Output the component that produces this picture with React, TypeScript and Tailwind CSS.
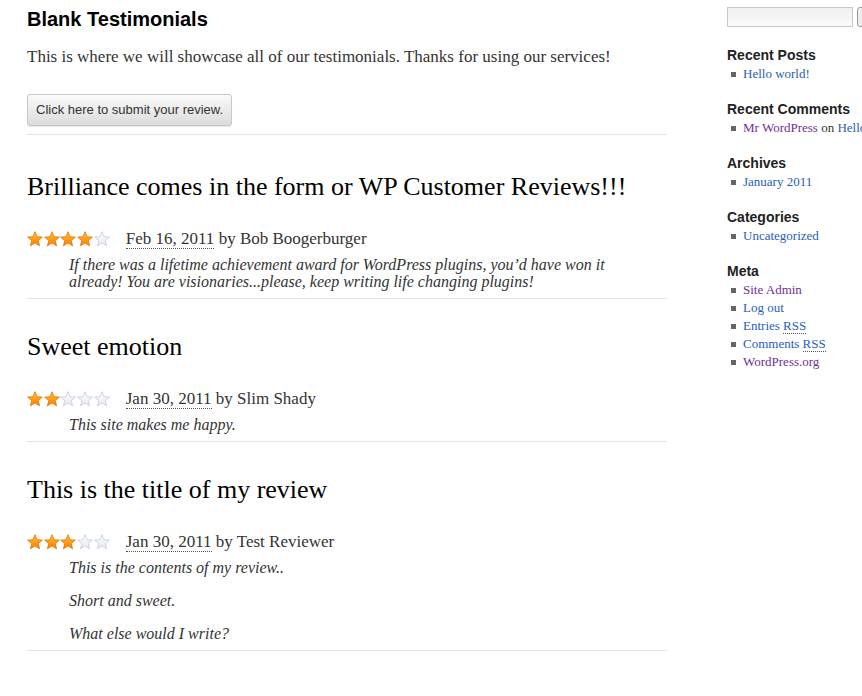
import React from "react";

interface Review {
  title: string;
  rating: number;
  date: string;
  author: string;
  body: string[];
}

const reviews: Review[] = [
  {
    title: "Brilliance comes in the form or WP Customer Reviews!!!",
    rating: 4,
    date: "Feb 16, 2011",
    author: "Bob Boogerburger",
    body: [
      "If there was a lifetime achievement award for WordPress plugins, you\u2019d have won it already! You are visionaries...please, keep writing life changing plugins!",
    ],
  },
  {
    title: "Sweet emotion",
    rating: 2,
    date: "Jan 30, 2011",
    author: "Slim Shady",
    body: ["This site makes me happy."],
  },
  {
    title: "This is the title of my review",
    rating: 3,
    date: "Jan 30, 2011",
    author: "Test Reviewer",
    body: ["This is the contents of my review..", "Short and sweet.", "What else would I write?"],
  },
];

const serif = "font-['Liberation_Serif',Georgia,serif]";
const sans = "font-['Liberation_Sans',Arial,sans-serif]";

function Star({ filled }: { filled: boolean }) {
  return (
    <svg width="16" height="16" viewBox="0 0 16 16" className="block">
      <polygon
        points="8,0.7 10,5.75 15.42,6.09 11.23,9.55 12.58,14.81 8,11.9 3.42,14.81 4.77,9.55 0.58,6.09 6,5.75"
        fill={filled ? "url(#starFill)" : "url(#starEmpty)"}
        stroke={filled ? "#e87400" : "#c3ccd8"}
        strokeWidth="0.8"
        strokeLinejoin="round"
      />
    </svg>
  );
}

function Stars({ rating }: { rating: number }) {
  return (
    <div className="flex gap-[0.7px]">
      {[1, 2, 3, 4, 5].map((i) => (
        <Star key={i} filled={i <= rating} />
      ))}
    </div>
  );
}

function ReviewItem({ review, first }: { review: Review; first: boolean }) {
  return (
    <div className="border-b border-[#e4e4e4]">
      <h2
        className={`${serif} text-[26px] leading-[30px] text-black ${first ? "mt-[37px]" : "mt-[33px]"}`}
      >
        {review.title}
      </h2>
      <div className="flex items-center mt-[27px] h-[20px]">
        <Stars rating={review.rating} />
        <span className={`${serif} text-[17px] text-[#333] ml-[16px]`}>
          <span className="border-b border-dotted border-[#555]">{review.date}</span> by {review.author}
        </span>
      </div>
      <div
        className={`${serif} italic text-[16px] leading-[17px] text-[#333] pl-[42px] pr-[60px] mt-[7px] mb-[8px]`}
      >
        {review.body.map((p, i) => (
          <p key={i} className={i < review.body.length - 1 ? "mb-[16px]" : ""}>
            {p}
          </p>
        ))}
      </div>
    </div>
  );
}

function Bullet() {
  return <span className="inline-block w-[5px] h-[5px] bg-[#666] mr-[7px] ml-[4px] align-middle mb-[2px]" />;
}

function SideSection({ title, children }: { title: string; children: React.ReactNode }) {
  return (
    <div className="mb-[17px]">
      <h3 className={`${sans} font-bold text-[14px] leading-[18px] text-[#222]`}>{title}</h3>
      <ul className={`${serif} text-[13px] leading-[18px] mt-[1px]`}>{children}</ul>
    </div>
  );
}

const blue = "text-[#2760b9]";
const purple = "text-[#70309a]";

export default function App() {
  return (
    <div className="w-[862px] h-[696px] overflow-hidden bg-white">
      <svg width="0" height="0" className="absolute">
        <defs>
          <linearGradient id="starFill" x1="0" y1="0" x2="0" y2="1">
            <stop offset="0" stopColor="#ffc233" />
            <stop offset="1" stopColor="#ff7b00" />
          </linearGradient>
          <linearGradient id="starEmpty" x1="0" y1="0" x2="0" y2="1">
            <stop offset="0" stopColor="#ffffff" />
            <stop offset="1" stopColor="#e3e9f0" />
          </linearGradient>
        </defs>
      </svg>
      <div className="flex">
        <main className="w-[640px] ml-[27px] shrink-0">
          <h1 className={`${sans} font-bold text-[20px] leading-[24px] text-black mt-[7px]`}>Blank Testimonials</h1>
          <p className={`${serif} text-[17px] leading-[24px] text-[#333] mt-[14px]`}>
            This is where we will showcase all of our testimonials. Thanks for using our services!
          </p>
          <div className="border-b border-[#e4e4e4] pt-[25px] pb-[8px]">
            <button
              className={`${sans} text-[13px] text-[#333] h-[32px] px-[8px] rounded-[3px] border border-[#c8c8c8] bg-gradient-to-b from-[#fafafa] to-[#dcdcdc] shadow-[0_1px_1px_rgba(0,0,0,0.1)]`}
            >
              Click here to submit your review.
            </button>
          </div>
          {reviews.map((r, i) => (
            <ReviewItem key={i} review={r} first={i === 0} />
          ))}
        </main>
        <aside className="ml-[60px] shrink-0 whitespace-nowrap">
          <div className="flex mt-[7px] gap-[4px]">
            <div className="w-[126px] h-[20px] border border-[#c8c8c8] bg-gradient-to-b from-[#f0f0f0] to-[#fafafa]" />
            <div className="w-[20px] h-[20px] border border-[#999] rounded-[3px] bg-[#eee]" />
          </div>
          <div className="mt-[19px]">
            <SideSection title="Recent Posts">
              <li><Bullet /><span className={blue}>Hello world!</span></li>
            </SideSection>
            <SideSection title="Recent Comments">
              <li>
                <Bullet />
                <span className={purple}>Mr WordPress</span>
                <span className="text-[#333]"> on </span>
                <span className={blue}>Hello world!</span>
              </li>
            </SideSection>
            <SideSection title="Archives">
              <li><Bullet /><span className={blue}>January 2011</span></li>
            </SideSection>
            <SideSection title="Categories">
              <li><Bullet /><span className={blue}>Uncategorized</span></li>
            </SideSection>
            <SideSection title="Meta">
              <li><Bullet /><span className={purple}>Site Admin</span></li>
              <li><Bullet /><span className={blue}>Log out</span></li>
              <li>
                <Bullet />
                <span className={blue}>
                  Entries <span className="border-b border-dotted border-[#555]">RSS</span>
                </span>
              </li>
              <li>
                <Bullet />
                <span className={blue}>
                  Comments <span className="border-b border-dotted border-[#555]">RSS</span>
                </span>
              </li>
              <li><Bullet /><span className={purple}>WordPress.org</span></li>
            </SideSection>
          </div>
        </aside>
      </div>
    </div>
  );
}
